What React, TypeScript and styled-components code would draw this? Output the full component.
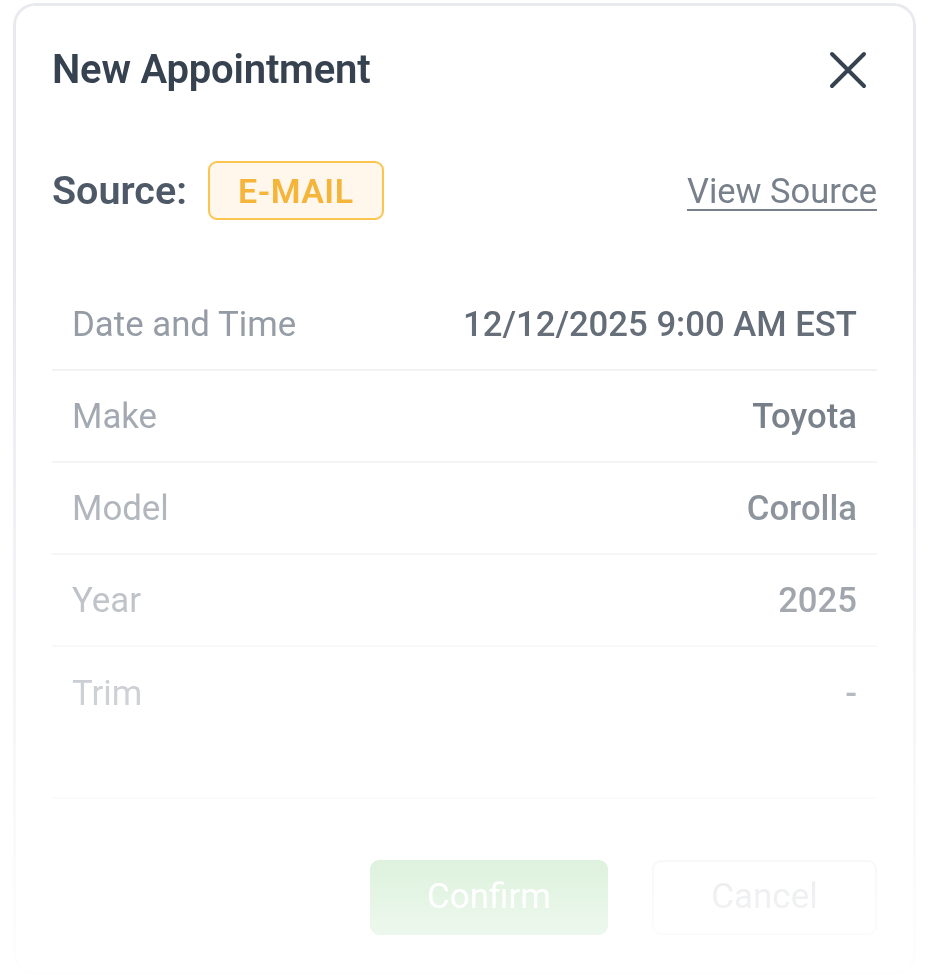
import React from "react";
import styled, { createGlobalStyle } from "styled-components";

const GlobalStyle = createGlobalStyle`
  html, body {
    margin: 0;
    padding: 0;
    background: #ffffff;
    font-family: Roboto, "Liberation Sans", Arial, sans-serif;
  }
  * { box-sizing: border-box; }
`;

const Page = styled.div`
  width: 928px;
  height: 977px;
  padding: 3px 12px 2px 13px;
  background: #ffffff;
`;

const Card = styled.div`
  height: 972px;
  border: 3px solid #e8eaee;
  border-radius: 22px;
  background: #ffffff;
  padding: 42px 36px 38px 36px;
  display: flex;
  flex-direction: column;
  -webkit-mask-image: linear-gradient(
    to bottom,
    #000 0px,
    #000 250px,
    rgba(0, 0, 0, 0.06) 972px
  );
  mask-image: linear-gradient(
    to bottom,
    #000 0px,
    #000 250px,
    rgba(0, 0, 0, 0.06) 972px
  );
`;

const Header = styled.div`
  display: flex;
  align-items: center;
  justify-content: space-between;
  height: 44px;
`;

const Title = styled.h1`
  margin: 0;
  font-size: 40px;
  font-weight: 600;
  line-height: 44px;
  color: #364250;
  letter-spacing: -0.2px;
`;

const CloseButton = styled.button`
  border: none;
  background: none;
  padding: 0;
  width: 40px;
  height: 40px;
  display: flex;
  align-items: center;
  justify-content: center;
  cursor: pointer;
  margin-right: 9px;
`;

const SourceRow = styled.div`
  margin-top: 69px;
  display: flex;
  align-items: center;
  height: 59px;
`;

const SourceLabel = styled.span`
  font-size: 39.5px;
  font-weight: 600;
  color: #4e5967;
`;

const Badge = styled.span`
  margin-left: 21px;
  height: 59px;
  padding: 0 28px;
  display: inline-flex;
  align-items: center;
  border: 2px solid #fbc550;
  border-radius: 9px;
  background: #fff7eb;
  color: #f5b43a;
  font-size: 34px;
  font-weight: 600;
  letter-spacing: 0.5px;
`;

const ViewLink = styled.a`
  margin-left: auto;
  font-size: 34.5px;
  color: #78808b;
  text-decoration: underline;
  text-underline-offset: 6px;
  text-decoration-thickness: 2px;
  cursor: pointer;
`;

const DetailList = styled.div`
  margin-top: 59px;
  display: flex;
  flex-direction: column;
  padding-bottom: 59px;
  border-bottom: 2px solid #eef0f2;
`;

const DetailRow = styled.div<{ $last?: boolean }>`
  display: flex;
  align-items: center;
  justify-content: space-between;
  height: ${(p) => (p.$last ? "91px" : "92px")};
  padding: 0 20px 0 20px;
  border-bottom: ${(p) => (p.$last ? "none" : "2px solid #eef0f2")};
`;

const Label = styled.span`
  font-size: 34.8px;
  color: #8a929c;
`;

const Value = styled.span`
  font-size: 34.7px;
  font-weight: 500;
  color: #545e6a;
`;

const Actions = styled.div`
  margin-top: 61px;
  display: flex;
  justify-content: flex-end;
  gap: 44px;
`;

const ActionButton = styled.button<{ $primary?: boolean }>`
  height: 75px;
  width: ${(p) => (p.$primary ? "238px" : "225px")};
  border-radius: 9px;
  font-family: Roboto, "Liberation Sans", Arial, sans-serif;
  font-size: 35px;
  padding-bottom: 4px;
  cursor: pointer;
  background: ${(p) => (p.$primary ? "#5cbf5e" : "#ffffff")};
  color: ${(p) => (p.$primary ? "#ffffff" : "#9aa1aa")};
  border: 2px solid ${(p) => (p.$primary ? "#5cbf5e" : "#d9dde2")};
`;

const details = [
  { label: "Date and Time", value: "12/12/2025 9:00 AM EST" },
  { label: "Make", value: "Toyota" },
  { label: "Model", value: "Corolla" },
  { label: "Year", value: "2025" },
  { label: "Trim", value: "-" },
];

export default function App() {
  return (
    <>
      <GlobalStyle />
      <Page>
        <Card>
          <Header>
            <Title>New Appointment</Title>
            <CloseButton aria-label="Close">
              <svg width="40" height="40" viewBox="0 0 40 40">
                <path
                  d="M4 4 L36 36 M36 4 L4 36"
                  stroke="#364250"
                  strokeWidth="4"
                  strokeLinecap="round"
                  fill="none"
                />
              </svg>
            </CloseButton>
          </Header>
          <SourceRow>
            <SourceLabel>Source:</SourceLabel>
            <Badge>E-MAIL</Badge>
            <ViewLink>View Source</ViewLink>
          </SourceRow>
          <DetailList>
            {details.map((d, i) => (
              <DetailRow key={d.label} $last={i === details.length - 1}>
                <Label>{d.label}</Label>
                <Value>{d.value}</Value>
              </DetailRow>
            ))}
          </DetailList>
          <Actions>
            <ActionButton $primary>Confirm</ActionButton>
            <ActionButton>Cancel</ActionButton>
          </Actions>
        </Card>
      </Page>
    </>
  );
}
